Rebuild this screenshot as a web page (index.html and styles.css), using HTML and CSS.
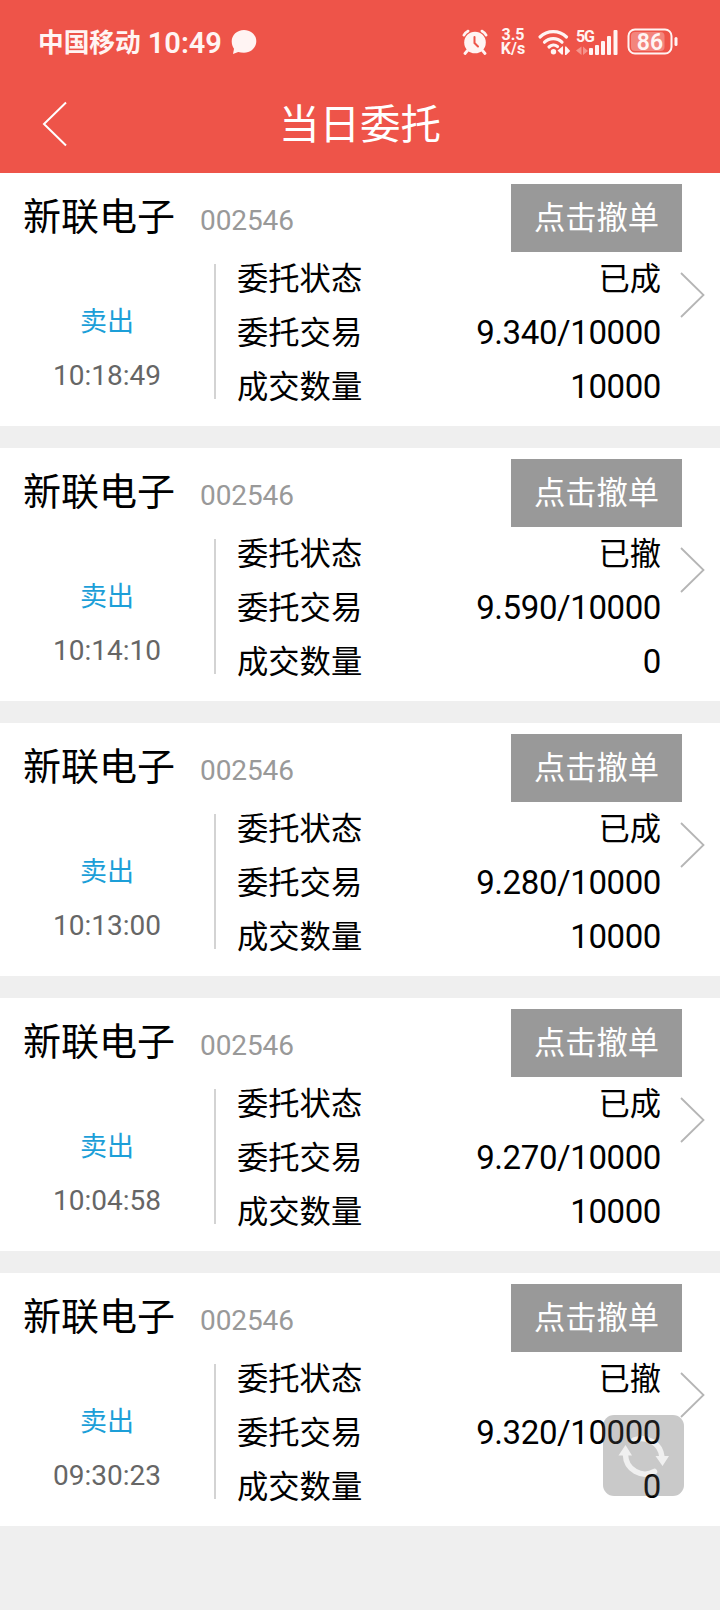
FILE: index.html
```html
<!DOCTYPE html>
<html lang="zh-CN">
  <head>
    <meta charset="UTF-8" />
    <meta name="viewport" content="width=device-width, initial-scale=1.0" />
    <title>当日委托</title>
    <link rel="stylesheet" href="styles.css">
  </head>
  <body>
    <header class="header">
      <div class="status-bar">
        <span class="carrier">中国移动</span>
        <span class="clock">10:49</span>
        <svg class="bubble" width="26" height="26" viewBox="0 0 26 26">
          <path d="M13 1C6 1 .7 6 .7 12.300c0 3.200 1 5.500 2.300 7.400L2 25l5.200-2c1.700.5 3.600.8 5.800.8 7 0 12.300-5.200 12.300-11.500S20 1 13 1z" fill="#fff4f3" />
        </svg>
        <div class="status-right">
          <svg class="alarm" width="26" height="26" viewBox="0 0 26 26" fill="none" stroke="#fff4f3" stroke-linecap="round">
            <circle cx="13" cy="13.500" r="10.800" fill="#fff4f3" stroke="none" />
            <path d="M1.800 6.200a12 12 0 0 1 4.400-4.200M24.200 6.200a12 12 0 0 0-4.400-4.200" stroke-width="2.600" />
            <path d="M5.500 21.500l-2.500 3M20.500 21.500l2.500 3" stroke-width="2.800" />
            <path d="M12.500 8v6l3.500 3.500" stroke="#ee5449" stroke-width="2" />
          </svg>
          <div class="speed"><span>3.5</span><span>K/s</span></div>
          <svg class="wifi" width="33" height="27" viewBox="0 0 33 27" fill="none" stroke="#fff4f3" stroke-linecap="round">
            <path d="M2 8a19 19 0 0 1 26.500 0" stroke-width="3.200" />
            <path d="M6.500 13.200a12.500 12.500 0 0 1 17.500 0" stroke-width="3.200" />
            <path d="M11 18a6.500 6.500 0 0 1 8.500-.500" stroke-width="3.200" />
            <circle cx="15.500" cy="22.800" r="2.700" fill="#fff4f3" stroke="none" />
            <path d="M25 17v8.500h-1.500L19.500 21.500zM27 26v-8.500h1.200l4 4.500-4 4z" fill="#fff4f3" stroke="none" />
          </svg>
          <svg class="signal" width="44" height="27" viewBox="0 0 44 27" fill="#fff4f3">
            <text class="net" x="0" y="13">5G</text>
            <path d="M5.500 17.500v8.500L0 21.500zM7 26v-8.500l5 4.500z" opacity=".4" />
            <rect x="13" y="19" width="4" height="7" rx="1" />
            <rect x="19" y="16" width="4" height="10" rx="1" />
            <rect x="25" y="12" width="4" height="14" rx="1" />
            <rect x="31" y="7" width="4" height="19" rx="1" />
            <rect x="37.500" y="1" width="4" height="25" rx="1" />
          </svg>
          <svg class="battery" width="52" height="28" viewBox="0 0 52 28">
            <rect x="4" y="4" width="33.500" height="19" rx="4" fill="#f3857d" />
            <rect x="1.500" y="1.500" width="43" height="24" rx="6.500" fill="none" stroke="#fff4f3" stroke-width="2" />
            <rect x="47.500" y="9" width="3" height="9" rx="1.500" fill="#fff4f3" />
            <text class="level" x="23" y="21.500" text-anchor="middle">86</text>
          </svg>
        </div>
      </div>
      <div class="title-bar">
        <svg class="back" width="26" height="46" viewBox="0 0 26 46">
          <path d="M24 1.500L2 23l22 21.500" fill="none" stroke="#fff" stroke-width="2" />
        </svg>
        <h1>当日委托</h1>
      </div>
    </header>

    <main class="orders" id="orders"></main>

    <svg class="refresh" width="81" height="81" viewBox="0 0 81 81">
      <!-- the two arrows are cut out of the grey square -->
      <mask id="arrows">
        <rect width="81" height="81" fill="#fff" />
        <g fill="none" stroke="#484848" stroke-width="5.500" stroke-linecap="round">
          <path d="M31 25A20.500 20.500 0 0 1 59 42" />
          <path d="M22.500 40a19.500 19.500 0 0 0 29 16.500" />
        </g>
        <path d="M52.500 41h13.500l-6.500 10zM15.500 40.500h13.500l-6.500-10.500z" fill="#484848" />
      </mask>
      <rect width="81" height="81" rx="11" fill="#555" fill-opacity=".318" mask="url(#arrows)" />
    </svg>

    <script>
      const orders = [
        { time: "10:18:49", status: "已成", deal: "9.340/10000", count: "10000" },
        { time: "10:14:10", status: "已撤", deal: "9.590/10000", count: "0" },
        { time: "10:13:00", status: "已成", deal: "9.280/10000", count: "10000" },
        { time: "10:04:58", status: "已成", deal: "9.270/10000", count: "10000" },
        { time: "09:30:23", status: "已撤", deal: "9.320/10000", count: "0" },
      ];

      // one card for each order
      document.getElementById("orders").innerHTML = orders.map(o => `
        <section class="card">
          <div class="card-top">
            <span class="name">新联电子</span>
            <span class="code">002546</span>
            <button class="cancel-btn">点击撤单</button>
          </div>
          <div class="card-body">
            <div class="side">
              <span class="sell">卖出</span>
              <span class="time">${o.time}</span>
            </div>
            <div class="details">
              <div class="row"><span>委托状态</span><span class="value">${o.status}</span></div>
              <div class="row"><span>委托交易</span><span class="value num">${o.deal}</span></div>
              <div class="row"><span>成交数量</span><span class="value num">${o.count}</span></div>
            </div>
            <svg class="arrow" width="26" height="46" viewBox="0 0 26 46">
              <path d="M1 1L23.500 23 1 45" fill="none" stroke="#b5b5b5" stroke-width="1.800" />
            </svg>
          </div>
        </section>`).join("");
    </script>
  </body>
</html>
```

FILE: styles.css
```css
* {
  box-sizing: border-box;
}
body {
  margin: 0;
  height: 1610px;
  overflow: hidden;
  background: #efefef;
  color: #000;
  font-family: Roboto, "Noto Sans CJK SC", sans-serif;
}
.header {
  height: 173px;
  background: #ee5449;
  color: #fff4f3;
}
.status-bar {
  display: flex;
  align-items: center;
  height: 84px;
  padding: 0 41px 0 38px;
}
.carrier {
  margin-top: 2px;
  font-size: 25.7px;
  font-weight: 700;
  line-height: 30px;
}
.clock {
  margin: 2px 0 0 7px;
  font-size: 29px;
  font-weight: 600;
  line-height: 30px;
}
.bubble {
  margin-left: 9px;
}
.status-right {
  display: flex;
  align-items: center;
  margin-left: auto;
}
.speed {
  display: flex;
  flex-direction: column;
  align-items: center;
  width: 28px;
  margin: 0 11px;
  font-size: 16px;
  font-weight: 700;
  line-height: 14px;
}
.wifi {
  overflow: visible;
}
.signal {
  margin-left: 5px;
  overflow: visible;
}
.net {
  font-size: 16px;
  font-weight: 700;
  letter-spacing: -1.2px;
}
.battery {
  margin-left: 7px;
}
.level {
  font-size: 23px;
  font-weight: 600;
  fill: #fff4f3;
}
.title-bar {
  display: grid;
  grid-template-columns: 120px 1fr 120px;
  align-items: center;
  height: 79px;
}
.back {
  margin-left: 42px;
}
h1 {
  margin: 3px 0 0;
  color: #fff;
  font-size: 40.5px;
  font-weight: 400;
  line-height: 50px;
  text-align: center;
}
.orders {
  display: flex;
  flex-direction: column;
  gap: 22px;
}
.card {
  height: 253px;
  padding-top: 11px;
  background: #fff;
}
.card-top {
  display: flex;
  align-items: center;
  height: 68px;
  padding: 0 38px 0 23px;
}
.name {
  margin-top: -2px;
  font-size: 38px;
  line-height: 50px;
}
.code {
  margin: 5px 0 0 25px;
  color: #999;
  font-size: 28px;
  letter-spacing: -0.1px;
}
.cancel-btn {
  width: 171px;
  height: 68px;
  margin-left: auto;
  padding: 0 0 6px;
  border: none;
  background: #999;
  color: #fff;
  font-family: inherit;
  font-size: 31.3px;
}
.card-body {
  display: flex;
  height: 162px;
}
.side {
  display: flex;
  flex-direction: column;
  align-items: center;
  width: 214px;
  padding-top: 43px;
}
.sell {
  color: #1c9fd8;
  font-size: 27px;
  line-height: 54px;
}
.time {
  color: #666;
  font-size: 28px;
  line-height: 54px;
}
.details {
  width: 447px;
  height: 135px;
  margin-top: 12px;
  padding-left: 21px;
  border-left: 2px solid #d3d3d3;
}
.row {
  display: flex;
  justify-content: space-between;
  height: 54px;
  font-size: 31.3px;
  line-height: 54px;
}
.row:first-child {
  margin-top: -11px;
}
.num {
  font-size: 33px;
  line-height: 52px;
  letter-spacing: -0.4px;
}
.arrow {
  margin: 20px 0 0 19px;
}
/* floats over the last card */
.refresh {
  position: absolute;
  top: 1415px;
  left: 603px;
}
```
